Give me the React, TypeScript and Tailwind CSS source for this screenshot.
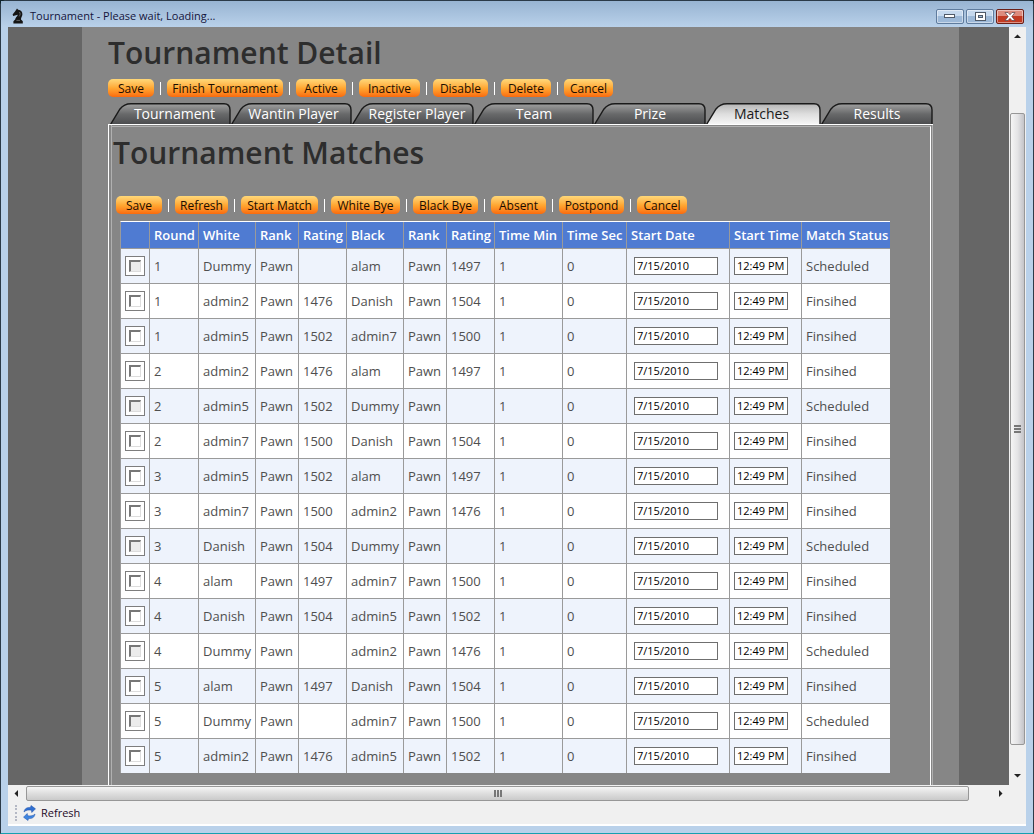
import React from "react";

type Action = { label: string; width: string };

const detailActions: Action[] = [
  { label: "Save", width: "w-[46px]" },
  { label: "Finish Tournament", width: "w-[116px]" },
  { label: "Active", width: "w-[50px]" },
  { label: "Inactive", width: "w-[61px]" },
  { label: "Disable", width: "w-[55px]" },
  { label: "Delete", width: "w-[50px]" },
  { label: "Cancel", width: "w-[49px]" },
];

const matchActions: Action[] = [
  { label: "Save", width: "w-[46px]" },
  { label: "Refresh", width: "w-[53px]" },
  { label: "Start Match", width: "w-[77px]" },
  { label: "White Bye", width: "w-[69px]" },
  { label: "Black Bye", width: "w-[65px]" },
  { label: "Absent", width: "w-[55px]" },
  { label: "Postpond", width: "w-[65px]" },
  { label: "Cancel", width: "w-[50px]" },
];

const tabs = [
  { label: "Tournament", width: 121, box: "w-[121px] pl-2" },
  { label: "Wantin Player", width: 121, box: "w-[121px] pl-1" },
  { label: "Register Player", width: 122, box: "w-[122px] pl-2" },
  { label: "Team", width: 120, box: "w-[120px]" },
  { label: "Prize", width: 112, box: "w-[112px]" },
  { label: "Matches", width: 115, box: "w-[115px] pr-1" },
  { label: "Results", width: 112, box: "w-[112px]" },
];

const columns = [
  { label: "", width: "w-[29px]" },
  { label: "Round", width: "w-[49px]" },
  { label: "White", width: "w-[57px]" },
  { label: "Rank", width: "w-[43px]" },
  { label: "Rating", width: "w-[48px]" },
  { label: "Black", width: "w-[57px]" },
  { label: "Rank", width: "w-[43px]" },
  { label: "Rating", width: "w-[48px]" },
  { label: "Time Min", width: "w-[68px]" },
  { label: "Time Sec", width: "w-[64px]" },
  { label: "Start Date", width: "w-[103px]" },
  { label: "Start Time", width: "w-[72px]" },
  { label: "Match Status", width: "w-[88px]" },
];

const matches: [number, string, string, string, string][] = [
  [1, "Dummy", "", "alam", "1497"],
  [1, "admin2", "1476", "Danish", "1504"],
  [1, "admin5", "1502", "admin7", "1500"],
  [2, "admin2", "1476", "alam", "1497"],
  [2, "admin5", "1502", "Dummy", ""],
  [2, "admin7", "1500", "Danish", "1504"],
  [3, "admin5", "1502", "alam", "1497"],
  [3, "admin7", "1500", "admin2", "1476"],
  [3, "Danish", "1504", "Dummy", ""],
  [4, "alam", "1497", "admin7", "1500"],
  [4, "Danish", "1504", "admin5", "1502"],
  [4, "Dummy", "", "admin2", "1476"],
  [5, "alam", "1497", "Danish", "1504"],
  [5, "Dummy", "", "admin7", "1500"],
  [5, "admin2", "1476", "admin5", "1502"],
];

function ActionBar({ actions }: { actions: Action[] }) {
  return (
    <div className="flex h-[18px] items-center">
      {actions.map((action, i) => (
        <React.Fragment key={action.label}>
          {i > 0 && (
            <span className="flex w-[13px] shrink-0 justify-center">
              <span className="h-[13px] w-px bg-white" />
            </span>
          )}
          <button
            type="button"
            className={`${action.width} h-[18px] shrink-0 rounded-[5px] bg-linear-to-b from-[#ffd878] via-[#ffa832] to-[#f96a0c] text-center text-xs leading-[17px] whitespace-nowrap text-[#1c0d00]`}
          >
            {action.label}
          </button>
        </React.Fragment>
      ))}
    </div>
  );
}

function TabShape({ width, active }: { width: number; active: boolean }) {
  const id = `tab-${width}-${active ? "on" : "off"}`;
  const d = `M0.5 21.5 L10 6 Q14 0.7 21 0.7 H${width - 7} Q${width - 1} 0.7 ${width - 1} 7 V21.5`;
  return (
    <svg className="absolute inset-0" width={width} height="21" aria-hidden="true">
      <defs>
        <linearGradient id={id} x1="0" y1="0" x2="0" y2="1">
          <stop offset="0" stopColor={active ? "#b4b4b4" : "#a0a0a0"} />
          <stop offset="0.5" stopColor={active ? "#dedede" : "#68696a"} />
          <stop offset="1" stopColor={active ? "#f6f6f6" : "#4b4c4e"} />
        </linearGradient>
      </defs>
      <path d={d} fill={`url(#${id})`} stroke="#1a1a1a" strokeWidth="1.4" />
    </svg>
  );
}

function Arrow({ d }: { d: string }) {
  return (
    <svg width="7" height="7" viewBox="0 0 7 7" aria-hidden="true">
      <path d={d} fill="#222" />
    </svg>
  );
}

function KnightIcon() {
  return (
    <svg width="16" height="16" viewBox="0 0 16 16" aria-hidden="true">
      <path
        d="M7 0.5 L8.2 1.8 C11 2 12.6 4 12.4 6.5 C12.3 8.5 10.8 9.6 11 11.4 L12.8 13.2 V15.5 H3.4 V13.2 L5.2 11.6 C5.2 9.6 7.4 8.6 7.8 6.8 L5 7.6 L3.2 8 L2.6 6.4 L5 3.4 Z"
        fill="#151515"
      />
      <path d="M9.4 4 C10.6 5.4 10.2 7 9.2 8.4 M6.4 12.4 H10" stroke="#777" strokeWidth="0.8" fill="none" />
    </svg>
  );
}

function RefreshIcon() {
  return (
    <svg width="13" height="16" viewBox="0 0 13 16" aria-hidden="true">
      <path d="M1 7 C1.5 3.5 4 2.2 7.5 2.5 L8 0.5 L12.5 3.8 L8.8 7.5 L8.4 5.2 C5 4.8 3 5.2 1 7Z" fill="#2f6fd0" stroke="#1c4fa8" strokeWidth="0.5" />
      <path d="M12 9 C11.5 12.5 9 13.8 5.5 13.5 L5 15.5 L0.5 12.2 L4.2 8.5 L4.6 10.8 C8 11.2 10 10.8 12 9Z" fill="#3f86e0" stroke="#1c4fa8" strokeWidth="0.5" />
    </svg>
  );
}

function TitleBar() {
  const control =
    "flex h-[15px] w-[28px] items-center justify-center rounded-[2px] border shadow-[inset_0_0_0_1px_rgba(255,255,255,0.45)]";
  return (
    <header className="flex h-[26px] shrink-0 items-center bg-linear-to-b from-[#98b4d2] to-[#b9d1ea] pt-1 pr-[9px] pl-[9px]">
      <KnightIcon />
      <h1 className="ml-1 flex-1 text-[11px] whitespace-nowrap text-[#14143c]">
        Tournament - Please wait, Loading...
      </h1>
      <div className="flex gap-0.5">
        <button type="button" aria-label="Minimize" className={`${control} border-[#5f7c9e] bg-linear-to-b from-[#c6d9ee] from-50% to-[#9db9d8] to-50%`}>
          <svg width="12" height="6" aria-hidden="true">
            <rect x="0.5" y="1.5" width="10" height="3" fill="#fff" stroke="#505a68" />
          </svg>
        </button>
        <button type="button" aria-label="Maximize" className={`${control} border-[#5f7c9e] bg-linear-to-b from-[#c6d9ee] from-50% to-[#9db9d8] to-50%`}>
          <svg width="11" height="9" aria-hidden="true">
            <rect x="0.5" y="0.5" width="10" height="8" fill="#fff" stroke="#505a68" />
            <rect x="3.5" y="3.5" width="4" height="2" fill="#9db9d8" stroke="#505a68" />
          </svg>
        </button>
        <button type="button" aria-label="Close" className={`${control} border-[#6b2018] bg-linear-to-b from-[#dd8b7c] from-50% to-[#c23a22] to-50%`}>
          <svg width="12" height="9" viewBox="0 0 12 9" aria-hidden="true">
            <path d="M1 .5H4L6 2.7 8 .5H11L7.8 4.5 11 8.5H8L6 6.3 4 8.5H1L4.2 4.5Z" fill="#fff" stroke="#5a4048" strokeWidth="0.7" />
          </svg>
        </button>
      </div>
    </header>
  );
}

function MatchTable() {
  const frame = "border-r border-b border-[#9a9a9a] last:border-r-0 group-last:border-b-0";
  const cell = `${frame} pl-1`;
  const field = "block h-[18px] border border-[#6f6f6f] bg-white px-0.5 pb-0.5 text-[11px] leading-[14px] text-black outline-none";
  return (
    <table className="w-[770px] table-fixed border-separate border-spacing-0 border-t border-l border-t-white border-l-[#9a9a9a] text-[13px] leading-[18px] text-[#4f4f4f]">
      <thead>
        <tr className="h-[27px] bg-[#4f7bd2] text-left text-white">
          {columns.map((column, i) => (
            <th key={i} scope="col" className={`${column.width} border-r border-b border-[#9a9a9a] pl-1 text-[13px] font-semibold whitespace-nowrap last:border-r-0`}>
              {column.label}
            </th>
          ))}
        </tr>
      </thead>
      <tbody>
        {matches.map(([round, white, whiteRating, black, blackRating], i) => {
          const scheduled = white === "Dummy" || black === "Dummy";
          return (
            <tr key={i} className="group h-[35px] bg-white last:h-[34px] odd:bg-[#eef3fc]">
              <td className={cell}>
                <label className="flex h-5 w-5 items-center justify-center border border-[#7d7d7d] bg-white">
                  <input
                    type="checkbox"
                    disabled={scheduled}
                    aria-label={`Select ${white} against ${black}`}
                    className="h-3 w-3 appearance-none border-t-2 border-r border-b border-l-2 border-t-[#777] border-r-[#ddd] border-b-[#ddd] border-l-[#777] bg-white disabled:bg-[#ececec]"
                  />
                </label>
              </td>
              <td className={cell}>{round}</td>
              <td className={cell}>{white}</td>
              <td className={cell}>Pawn</td>
              <td className={cell}>{whiteRating}</td>
              <td className={cell}>{black}</td>
              <td className={cell}>Pawn</td>
              <td className={cell}>{blackRating}</td>
              <td className={cell}>1</td>
              <td className={cell}>0</td>
              <td className={`${frame} pl-[7px]`}>
                <input type="text" aria-label="Start date" defaultValue="7/15/2010" className={`${field} w-[84px]`} />
              </td>
              <td className={cell}>
                <input type="text" aria-label="Start time" defaultValue="12:49 PM" className={`${field} w-[54px]`} />
              </td>
              <td className={cell}>{scheduled ? "Scheduled" : "Finsihed"}</td>
            </tr>
          );
        })}
      </tbody>
    </table>
  );
}

export default function App() {
  return (
    <div className="bg-[#10242c] font-[Open_Sans,sans-serif]">
      <div className="flex min-h-screen flex-col rounded-t-md border border-[#2b3a48] border-b-[#15a0b0] bg-[#b9d1ea]">
        <TitleBar />
        <div className="mr-[7px] mb-[7px] ml-[7px] flex flex-1 flex-col border-b-2 border-white bg-[#f0f0f0]">
          <div className="flex flex-1">
            <main className="flex min-w-0 flex-1 bg-[#666] pr-[50px] pl-[74px]">
              <div className="flex flex-1 flex-col bg-[#868686] pr-[26px] pl-[26px]">
                <h2 className="h-[52px] pt-[5px] text-[30px] leading-[42px] font-semibold whitespace-nowrap text-[#2d2d2d]">
                  Tournament Detail
                </h2>
                <ActionBar actions={detailActions} />
                <nav className="mt-[6px] ml-0.5 flex h-[21px]">
                  {tabs.map((tab) => {
                    const active = tab.label === "Matches";
                    return (
                      <button
                        key={tab.label}
                        type="button"
                        className={`${tab.box} relative h-[21px] shrink-0 text-center text-sm leading-[21px] whitespace-nowrap ${active ? "text-[#1a1a1a]" : "text-white"}`}
                      >
                        <TabShape width={tab.width} active={active} />
                        <span className="relative">{tab.label}</span>
                      </button>
                    );
                  })}
                </nav>
                <div className="flex flex-1 flex-col border-t border-l border-white">
                  <div className="ml-[2px] flex flex-1 flex-col border-r border-l border-[#b0b0b0] pt-px pr-px">
                    <section className="flex-1 border-t border-r border-t-[#b0b0b0] border-r-white pb-[11px]">
                      <h2 className="h-[69px] pt-[5px] pl-px text-[30px] leading-[42px] font-semibold whitespace-nowrap text-[#2d2d2d]">
                        Tournament Matches
                      </h2>
                      <div className="pl-1">
                        <ActionBar actions={matchActions} />
                      </div>
                      <div className="pt-[7px] pl-2">
                        <MatchTable />
                      </div>
                    </section>
                  </div>
                </div>
              </div>
            </main>
            <div className="flex w-[17px] flex-col items-center bg-[#f0f0f0] py-1.5">
              <Arrow d="M0 5L3.5 1.5L7 5Z" />
              <div className="mt-[73px] mb-[27px] flex w-[15px] flex-1 flex-col items-center justify-center gap-px rounded-[2px] border border-[#979797] bg-linear-to-r from-[#f5f5f5] via-[#e4e4e6] to-[#c4c4c8]">
                <span className="h-0.5 w-[7px] bg-[#777]" />
                <span className="h-0.5 w-[7px] bg-[#777]" />
                <span className="h-0.5 w-[7px] bg-[#777]" />
              </div>
              <Arrow d="M0 2L3.5 5.5L7 2Z" />
            </div>
          </div>
          <div className="flex h-[17px] items-center pr-[22px] pl-[5px]">
            <Arrow d="M5 0L1.5 3.5L5 7Z" />
            <div className="mr-[28px] ml-[6px] flex h-[15px] flex-1 items-center justify-center gap-px rounded-[2px] border border-[#979797] bg-linear-to-b from-[#f5f5f5] via-[#dedede] to-[#cacaca]">
              <span className="h-[7px] w-0.5 bg-[#777]" />
              <span className="h-[7px] w-0.5 bg-[#777]" />
              <span className="h-[7px] w-0.5 bg-[#777]" />
            </div>
            <Arrow d="M2 0L5.5 3.5L2 7Z" />
          </div>
          <div className="flex h-[22px] items-center pl-[7px]">
            <span className="h-4 border-l-2 border-dotted border-[#b4b8c4]" />
            <button type="button" className="ml-1.5 flex items-center gap-[5px] text-[11px] text-[#1e0a28]">
              <RefreshIcon />
              Refresh
            </button>
          </div>
        </div>
      </div>
    </div>
  );
}
